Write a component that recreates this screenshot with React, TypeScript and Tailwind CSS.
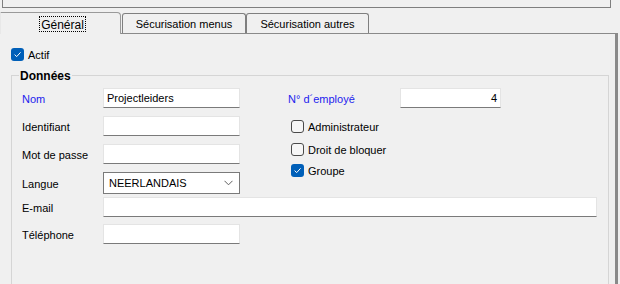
import React from 'react';

const Box: React.FC<{ checked?: boolean }> = ({ checked }) =>
  checked ? (
    <span className="flex h-[13px] w-[13px] shrink-0 items-center justify-center rounded-[3px] bg-[#005fb8]">
      <svg width="9" height="9" viewBox="0 0 9 9">
        <path d="M1.6 4.6 L3.7 6.6 L7.6 2.3" fill="none" stroke="#fff" strokeWidth="1" />
      </svg>
    </span>
  ) : (
    <span className="h-[13px] w-[13px] shrink-0 rounded-[3px] border border-[#4a4a4a] bg-[#f6f6f6]" />
  );

const Field: React.FC<{ w: string; value?: string; right?: boolean }> = ({ w, value, right }) => (
  <div
    className={`flex h-[20px] items-center border border-[#e4e4e4] border-b-[#7a7a7a] bg-white px-[3px] pt-[1px] ${w} ${
      right ? 'justify-end' : ''
    }`}
  >
    {value}
  </div>
);

const Label: React.FC<{ w: string; blue?: boolean; children: React.ReactNode }> = ({ w, blue, children }) => (
  <span className={`${w} pt-[2px] ${blue ? 'text-[#2222ee]' : ''}`}>{children}</span>
);

const CheckRow: React.FC<{ label: string; checked?: boolean; className?: string }> = ({ label, checked, className }) => (
  <div className={`flex h-[13px] items-center gap-[4px] ${className ?? ''}`}>
    <Box checked={checked} />
    <span className="pt-[2px]">{label}</span>
  </div>
);

export default function App() {
  return (
    <div
      className="h-[284px] w-[620px] overflow-hidden bg-[#f0f0f0] text-[11px] text-black"
      style={{ fontFamily: '"Liberation Sans", Arial, sans-serif' }}
    >
      {/* frame above the tabs */}
      <div className="ml-[2px] h-[8px] w-[609px] border-x border-b border-[#7f7f7f]" />

      {/* tabs */}
      <div className="flex h-[25px] items-end">
        <div className="relative z-10 -mb-px flex h-[22px] w-[121px] items-start justify-center rounded-tr-[4px] border-x border-t border-[#9a9a9a] border-l-[#e8e8e8] bg-[#f0f0f0] pl-[4px] pt-[3px]">
          <span className="flex h-[16px] items-center border border-dotted border-black px-[1px] pt-[1px] text-[12px]">
            Général
          </span>
        </div>
        <div className="ml-[1px] flex h-[20px] w-[124px] items-center justify-center rounded-t-[3px] border-x border-t border-[#7f7f7f] pt-[1px]">
          Sécurisation menus
        </div>
        <div className="flex h-[20px] w-[123px] items-center justify-center rounded-t-[3px] border-x border-t border-[#7f7f7f] pt-[1px]">
          Sécurisation autres
        </div>
      </div>

      {/* tab page */}
      <div className="h-[260px] w-[618px] border-r-[3px] border-t border-[#8a8a8a] pl-[11px] pt-[14px]">
        <CheckRow label="Actif" checked />

        <fieldset className="mt-[7px] h-[240px] w-[598px] border border-[#d5d5d5] p-0">
          <legend className="ml-[7px] px-[1px] pt-[1px] text-[12px] font-bold leading-[14px]">Données</legend>

          <div className="pl-[10px] pt-[5px]">
            <div className="flex">
              {/* left column */}
              <div className="flex w-[218px] flex-col">
                <div className="flex items-center">
                  <Label w="w-[81px]" blue>Nom</Label>
                  <Field w="w-[137px]" value="Projectleiders" />
                </div>
                <div className="mt-[8px] flex items-center">
                  <Label w="w-[81px]">Identifiant</Label>
                  <Field w="w-[137px]" />
                </div>
                <div className="mt-[8px] flex items-center">
                  <Label w="w-[81px]">Mot de passe</Label>
                  <Field w="w-[137px]" />
                </div>
                <div className="mt-[8px] flex items-center">
                  <Label w="w-[81px]">Langue</Label>
                  <div className="flex h-[22px] w-[137px] items-center justify-between border border-[#7a7a7a] bg-white pl-[5px] pr-[6px]">
                    <span className="pt-[1px]">NEERLANDAIS</span>
                    <svg width="9" height="6" viewBox="0 0 9 6">
                      <path d="M0.5 0.8 L4.5 4.8 L8.5 0.8" fill="none" stroke="#606060" strokeWidth="1" />
                    </svg>
                  </div>
                </div>
              </div>

              {/* right column */}
              <div className="ml-[48px] flex flex-col">
                <div className="flex items-center">
                  <Label w="w-[112px]" blue>N° d´employé</Label>
                  <Field w="w-[101px]" value="4" right />
                </div>
                <CheckRow label="Administrateur" className="ml-[3px] mt-[12px]" />
                <CheckRow label="Droit de bloquer" className="ml-[3px] mt-[10px]" />
                <CheckRow label="Groupe" checked className="ml-[3px] mt-[8px]" />
              </div>
            </div>

            <div className="mt-[3px] flex items-center">
              <Label w="w-[81px]">E-mail</Label>
              <Field w="w-[494px]" />
            </div>
            <div className="mt-[7px] flex items-center">
              <Label w="w-[81px]">Téléphone</Label>
              <Field w="w-[137px]" />
            </div>
          </div>
        </fieldset>
      </div>
    </div>
  );
}
